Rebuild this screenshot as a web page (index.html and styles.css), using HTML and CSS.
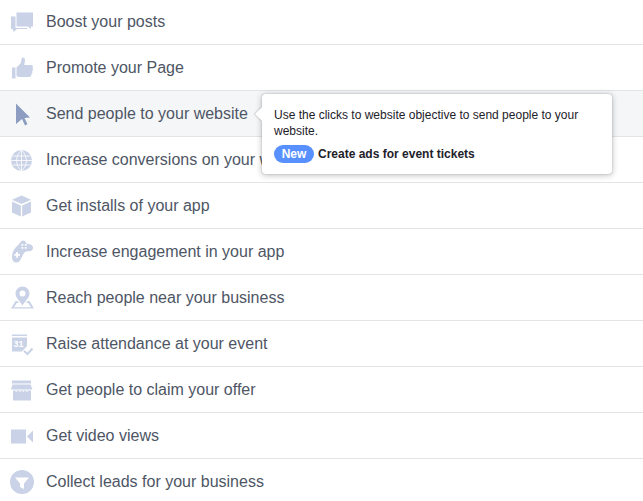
FILE: index.html
```html
<!DOCTYPE html>
<html lang="en">
<head>
<meta charset="utf-8">
<title>Objectives</title>
<link rel="stylesheet" href="styles.css">
</head>
<body>
<ul class="list">
  <li class="row">
    <svg class="icon" viewBox="0 0 24 24"><path d="M5.500 2.500H22v14h-2v2.500l-3-2.500H5.500z" /><path d="M0 6.500h4.500v11.500H16v1H6l-3.500 3-.8-3H0z"/></svg>
    <span>Boost your posts</span>
  </li>
  <li class="row">
    <svg class="icon" viewBox="0 0 24 24"><path d="M1 11.500h3.500v11H1z"/><path d="M5.500 11.500 9.500 7.500 11 1.500c2.200-.5 3.200 1.200 3 3.200L13.200 9h7c1.800 0 2.300 2 1.300 3 .7 1 .7 2.400-.3 3.100.5 1.200.2 2.400-.8 3 .3 1.500-.5 3-2.200 3h-7.700c-2.200 0-4-.4-5-1.100z"/></svg>
    <span>Promote your Page</span>
  </li>
  <li class="row active">
    <svg class="icon" viewBox="0 0 24 24"><path d="M5 1.500 19 15.500l-5.500.5 3 6-2.500 1.500-3-6.500L5 22z"/></svg>
    <span>Send people to your website</span>
  </li>
  <li class="row">
    <svg class="icon" viewBox="0 0 24 24"><circle cx="10.500" cy="12.500" r="10.500"/><path class="grid" d="M0 12.500h21M1.500 8h18M1.500 17h18M10.500 2v21M10.500 2c-6.500 6-6.500 15 0 21M10.500 2c6.500 6 6.500 15 0 21"/></svg>
    <span>Increase conversions on your website</span>
  </li>
  <li class="row">
    <svg class="icon" viewBox="0 0 24 24"><path d="M10.500 1.500 20 5.800 10.500 10 1 5.800z"/><path d="M1 7.500 9.800 11.500V22.500L1 18.500zM20 7.500 11.200 11.500V22.500L20 18.500z"/></svg>
    <span>Get installs of your app</span>
  </li>
  <li class="row">
    <svg class="icon" viewBox="0 0 24 24"><path fill-rule="evenodd" d="M12 .5c1.800 0 3 1.200 3.300 3l4.200 1c2 .5 3 2.700 2.300 4.500-.8 1.800-2.800 2.500-5 2.200-1.800-.3-3.300.7-4.300 2.500L9 20.500c-1.300 2-3.700 2.700-5.800 1.500C1 20.700.7 17.500 1.200 14.500 1.800 11 4 7.500 6.800 5.500 8.800 4 9.500.5 12 .5zM10.500 4v1.800h1.800V4zM13.800 4v1.800h1.800V4zM10.500 7v1.800h1.800V7zM13.800 7v1.800h1.800V7zM5.200 12v2H3.300v1.800h1.900v2H7v-2h1.900V14H7v-2z"/></svg>
    <span>Increase engagement in your app</span>
  </li>
  <li class="row">
    <svg class="icon" viewBox="0 0 24 24"><path fill-rule="evenodd" d="M11.500.5a7 7 0 0 1 7 7c0 4-4 7.500-7 12-3-4.500-7-8-7-12a7 7 0 0 1 7-7zM11.500 4.500a3 3 0 1 0 0 6 3 3 0 0 0 0-6z"/><path d="M4.500 15h1.700l1.600 2H5.700L3 21.300h17L17.300 17h-2.100l1.600-2h1.700l4.500 7.500H0z"/></svg>
    <span>Reach people near your business</span>
  </li>
  <li class="row">
    <svg class="icon" viewBox="0 0 24 24"><path d="M1 2.500h15v1.500H1z"/><path d="M1 5.500h15v8.500l-5 5.500H1z"/><text class="date" x="2.500" y="15">31</text><path class="check" d="M13 19l3.500 3 5-5.500"/></svg>
    <span>Raise attendance at your event</span>
  </li>
  <li class="row">
    <svg class="icon" viewBox="0 0 24 24"><path d="M1 2.500h19v3H1z"/><path d="M1.500 6.500h18l2 5H0z"/><path d="M2 12.500h18v10H2z"/><path class="notch" d="M4.500 13.200h1.600M8 13.200h1.600M11.500 13.200h1.600M15 13.200h1.600"/></svg>
    <span>Get people to claim your offer</span>
  </li>
  <li class="row">
    <svg class="icon" viewBox="0 0 24 24"><path d="M0 5.500h15v14H0zM16 12.500 22 6.500v12z"/></svg>
    <span>Get video views</span>
  </li>
  <li class="row">
    <svg class="icon" viewBox="0 0 24 24"><circle cx="11" cy="12" r="12"/><path class="funnel" d="M4 7.500h14l-5 6v5.500l-4-2v-3.500z"/></svg>
    <span>Collect leads for your business</span>
  </li>
</ul>
<div class="tip">
  <p class="tip-text">Use the clicks to website objective to send people to your website.</p>
  <p class="tip-new"><span class="badge">New</span><b>Create ads for event tickets</b></p>
</div>
</body>
</html>
```
FILE: styles.css
```css
html, body {
  margin: 0;
  padding: 0;
  height: 501px;
  overflow: hidden;
  background: #fff;
}
body {
  position: relative;
  font-family: "Liberation Sans", Arial, sans-serif;
}
.list {
  list-style: none;
  margin: -1px 0 0;
  padding: 0;
}
.row {
  display: flex;
  align-items: center;
  box-sizing: border-box;
  height: 46px;
  padding-left: 11px;
  gap: 11px;
  border-bottom: 1px solid #e3e4e7;
  font-size: 16px;
  color: #4e5665;
}
.row.active {
  background: #f5f6f8;
}
.icon {
  flex: none;
  width: 24px;
  height: 24px;
  fill: #c9d2e6;
  overflow: visible;
}
.active .icon {
  fill: #8d9dc2;
}
.grid {
  fill: none;
  stroke: #fff;
  stroke-width: .8;
}
.date {
  fill: #fff;
  font-size: 9px;
  font-weight: bold;
}
.check {
  fill: none;
  stroke: #c9d2e6;
  stroke-width: 2;
}
.notch {
  fill: none;
  stroke: #fff;
  stroke-width: 1;
}
.funnel {
  fill: #fff;
}
.tip {
  position: absolute;
  left: 262px;
  top: 94px;
  box-sizing: border-box;
  width: 350px;
  height: 80px;
  padding: 13px 12px 0;
  background: #fff;
  border-radius: 3px;
  box-shadow: 0 0 1px rgba(0, 0, 0, .45), 0 1px 6px rgba(0, 0, 0, .28);
  font-size: 12px;
  color: #1d2129;
}
.tip::before {
  content: "";
  position: absolute;
  left: -5px;
  top: 15px;
  width: 10px;
  height: 10px;
  background: #fff;
  transform: rotate(45deg);
  box-shadow: -1px 1px 1px rgba(0, 0, 0, .15);
}
.tip-text {
  position: relative;
  margin: 0;
  line-height: 16px;
}
.tip-new {
  display: flex;
  align-items: center;
  gap: 4px;
  margin: 6px 0 0;
  line-height: 18px;
}
.badge {
  display: block;
  width: 40px;
  height: 18px;
  border-radius: 9px;
  background: #5890ff;
  color: #fff;
  font-weight: bold;
  text-align: center;
}
```
